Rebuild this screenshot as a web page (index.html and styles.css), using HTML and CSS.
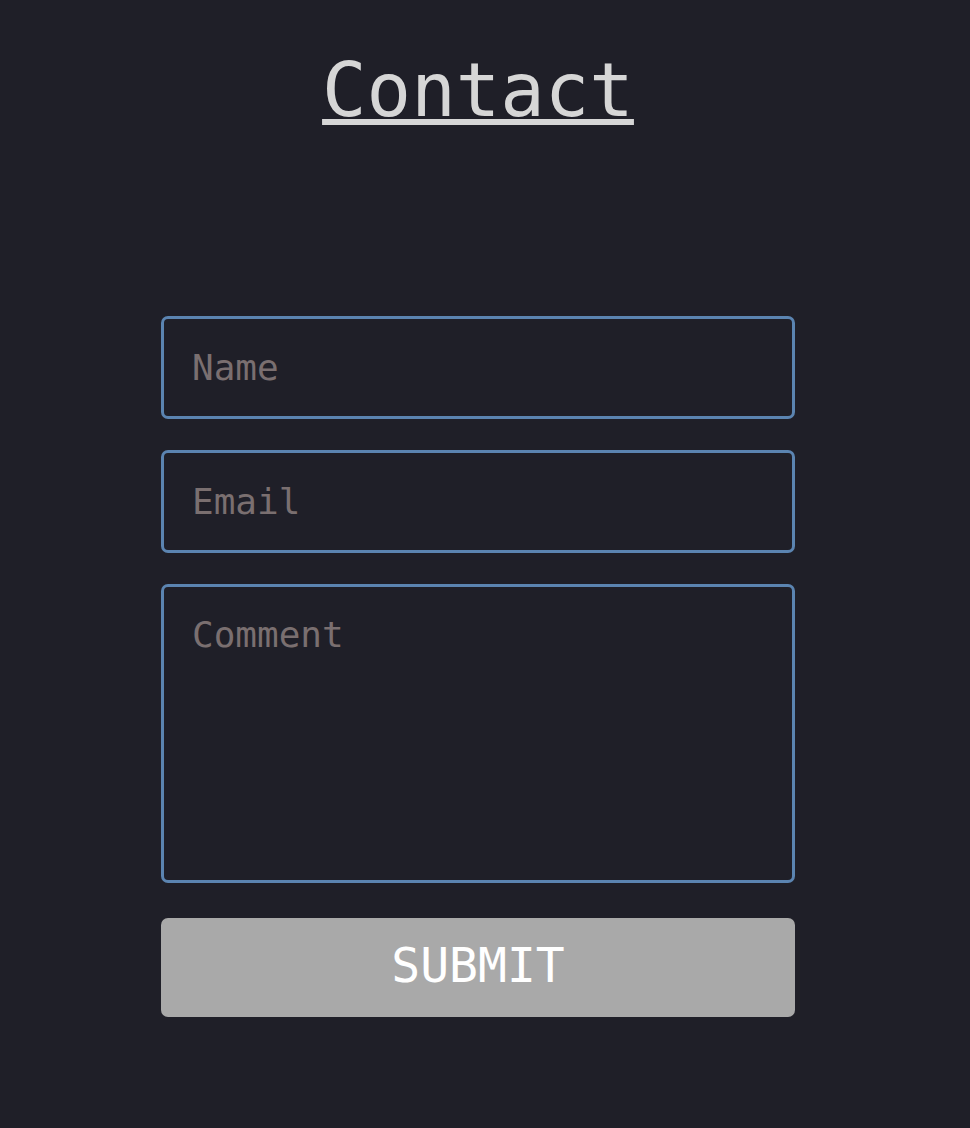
FILE: index.html
```html
<!DOCTYPE html>
<html lang="en">
<head>
<meta charset="utf-8">
<title>Contact</title>
<link rel="stylesheet" href="styles.css">
</head>
<body>
<main class="page">
  <h1 class="title">Contact</h1>
  <form class="form">
    <input class="field" type="text" placeholder="Name">
    <input class="field" type="email" placeholder="Email">
    <textarea class="field area" placeholder="Comment"></textarea>
    <button class="submit" type="button">SUBMIT</button>
  </form>
</main>
</body>
</html>
```
FILE: styles.css
```css
html, body {
  margin: 0;
  padding: 0;
  background: #1f1f28;
}
body {
  font-family: "DejaVu Sans Mono", "Liberation Mono", monospace;
  min-height: 1128px;
}
.page {
  width: 956px;
  display: flex;
  flex-direction: column;
  align-items: center;
}
.title {
  margin: 47px 0 0;
  font-size: 74px;
  font-weight: normal;
  color: #d6d6d6;
  line-height: normal;
  text-decoration: underline;
  text-decoration-thickness: 6px;
  text-underline-offset: 3px;
}
.form {
  margin-top: 183px;
  width: 634px;
  display: flex;
  flex-direction: column;
}
.field {
  box-sizing: border-box;
  width: 100%;
  height: 103px;
  margin: 0 0 31px;
  padding: 0 28px;
  background: transparent;
  border: 3px solid #5b84b1;
  border-radius: 7px;
  font-family: inherit;
  font-size: 36px;
  color: #d6d6d6;
  outline: none;
}
.field::placeholder {
  color: #7a6f70;
}
.area {
  height: 299px;
  margin-bottom: 35px;
  padding-top: 26px;
  resize: none;
  line-height: 1.2;
}
.submit {
  height: 99px;
  width: 100%;
  border: none;
  border-radius: 7px;
  background: #a9a9a9;
  color: #ffffff;
  font-family: inherit;
  font-size: 48px;
  padding: 0 0 5px;
}
```
